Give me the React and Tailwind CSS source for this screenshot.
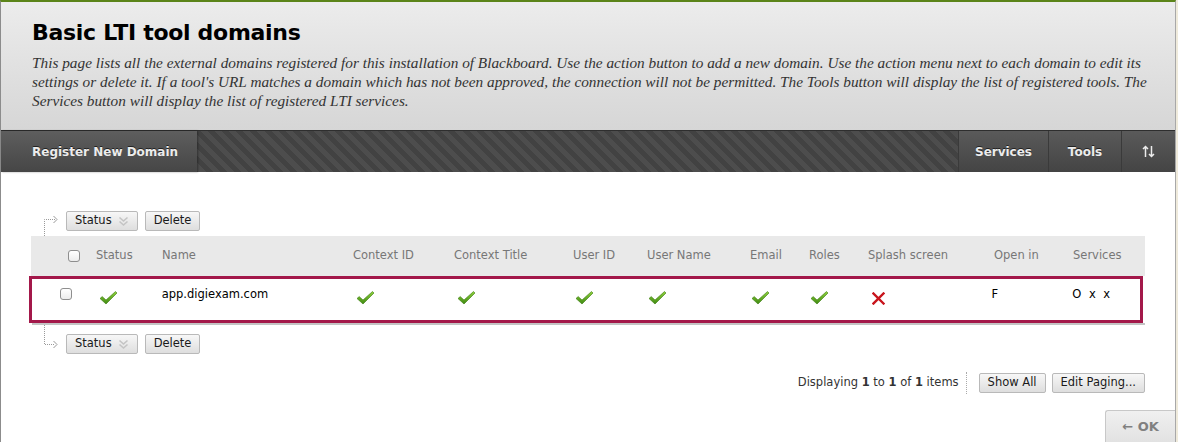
import React from 'react';

const sans = "font-['DejaVu_Sans','Liberation_Sans',sans-serif]";

function Check() {
    return (
        <svg width="19" height="15" viewBox="0 0 19 15">
            <defs>
                <linearGradient id="cg" x1="0" y1="0" x2="0" y2="1">
                    <stop offset="0" stopColor="#8fd13a" />
                    <stop offset="1" stopColor="#3f8a12" />
                </linearGradient>
            </defs>
            <path d="M1 8.5 L3.2 6.6 L7 10 L16.5 1.5 L18 3 L7 14 Z" fill="url(#cg)" stroke="#3a7a10" strokeWidth="0.6" strokeLinejoin="round" />
        </svg>
    );
}

function Cross() {
    return (
        <svg width="13" height="13" viewBox="0 0 13 13">
            <path d="M1.5 1.5 L11.5 11.5 M11.5 1.5 L1.5 11.5" stroke="#c8141c" strokeWidth="2.4" strokeLinecap="square" />
        </svg>
    );
}

function Box({ className = '' }) {
    return <span className={`inline-block w-[12px] h-[12px] rounded-[3px] border border-[#8e8e8e] bg-gradient-to-b from-white to-[#ececec] ${className}`}></span>;
}

function SmallButton({ children }) {
    return (
        <button className="h-[20px] px-[8px] border border-[#b9b9b9] rounded-[2px] bg-gradient-to-b from-[#f7f7f7] to-[#dedede] text-[11.5px] text-[#1a1a1a] leading-none flex items-center gap-[6px]">
            {children}
        </button>
    );
}

function ActionRow({ bottom }) {
    return (
        <div className="flex items-center h-[20px] pl-[42px]">
            <svg width="16" height="20" viewBox="0 0 16 20" className="mr-[7px] overflow-visible">
                {bottom ? (
                    <path d="M1.5 -9 V10.5 H12" fill="none" stroke="#999" strokeWidth="1" strokeDasharray="1 1" />
                ) : (
                    <path d="M1.5 25 V8.5 H12" fill="none" stroke="#999" strokeWidth="1" strokeDasharray="1 1" />
                )}
                <path d={bottom ? 'M10.5 7 L14 10.5 L10.5 14' : 'M10.5 5 L14 8.5 L10.5 12'} fill="none" stroke="#999" strokeWidth="1" />
            </svg>
            <SmallButton>
                Status
                <svg width="11" height="11" viewBox="0 0 11 11">
                    <path d="M1.5 1.5 L5.5 5 L9.5 1.5 M1.5 5.5 L5.5 9 L9.5 5.5" fill="none" stroke="#c4c4c4" strokeWidth="1.6" />
                </svg>
            </SmallButton>
            <span className="w-[7px]"></span>
            <SmallButton>Delete</SmallButton>
        </div>
    );
}

const cols = [
    { label: 'Status', w: 'w-[66px]' },
    { label: 'Name', w: 'w-[191px]' },
    { label: 'Context ID', w: 'w-[101px]' },
    { label: 'Context Title', w: 'w-[119px]' },
    { label: 'User ID', w: 'w-[74px]' },
    { label: 'User Name', w: 'w-[103px]' },
    { label: 'Email', w: 'w-[59px]' },
    { label: 'Roles', w: 'w-[59px]' },
    { label: 'Splash screen', w: 'w-[126px]' },
    { label: 'Open in', w: 'w-[79px]' },
    { label: 'Services', w: 'w-[70px]' },
];

const barBtn = 'bg-gradient-to-b from-[#5a5a5a] to-[#444] border-l border-l-[#3a3a3a] flex items-center justify-center text-[12px] font-bold text-[#ececec] [text-shadow:0_-1px_0_#222]';

export default function App() {
    return (
        <div className={`w-[1178px] h-[442px] bg-[#efeadb] overflow-hidden ${sans}`}>
            <div className="w-[1176px] h-[442px] bg-white border-t-2 border-t-[#5b8419] border-l border-l-[#8c8c8c] border-r border-r-[#a8a8a8] flex flex-col">
                <div className="h-[128px] bg-gradient-to-b from-[#ececec] to-[#d6d6d6] pl-[31px] pt-[17px]">
                    <h1 className="text-[22px] font-bold text-black leading-[28px] tracking-[-0.3px]">Basic LTI tool domains</h1>
                    <p className="mt-[6px] font-['Liberation_Serif',serif] italic text-[15.3px] leading-[19px] text-[#333] whitespace-nowrap">
                        This page lists all the external domains registered for this installation of Blackboard. Use the action button to add a new domain. Use the action menu next to each domain to edit its<br />
                        settings or delete it. If a tool's URL matches a domain which has not been approved, the connection will not be permitted. The Tools button will display the list of registered tools. The<br />
                        Services button will display the list of registered LTI services.
                    </p>
                </div>

                <div className="h-[42px] flex border-t border-t-[#2e2e2e] bg-[#474747] bg-[repeating-linear-gradient(45deg,#4d4d4d_0px,#4d4d4d_5px,#424242_5px,#424242_10px)]">
                    <div className="w-[196px] bg-gradient-to-b from-[#5e5e5e] to-[#464646] shadow-[1px_0_2px_rgba(0,0,0,0.35)] flex items-center pl-[31px] text-[12px] font-bold text-[#ececec] [text-shadow:0_-1px_0_#222]">
                        Register New Domain
                    </div>
                    <div className="flex-1"></div>
                    <div className={`w-[90px] ${barBtn}`}>Services</div>
                    <div className={`w-[73px] ${barBtn}`}>Tools</div>
                    <div className={`w-[54px] ${barBtn}`}>
                        <svg width="13" height="13" viewBox="0 0 13 13">
                            <path d="M3.5 12 V1.5 M1 4 L3.5 1.5 L6 4 M9.5 1 V11.5 M7 9 L9.5 11.5 L12 9" fill="none" stroke="#ececec" strokeWidth="1.5" />
                        </svg>
                    </div>
                </div>

                <div className="flex-1 relative pt-[39px]">
                    <ActionRow />
                    <div className="ml-[30px] w-[1114px] mt-[5px]">
                        <div className="h-[40px] bg-[#e9e9e9] flex items-center text-[11.5px] text-[#777]">
                            <div className="w-[65px] pl-[37px] flex items-center"><Box /></div>
                            {cols.map(c => (
                                <div key={c.label} className={`${c.w} shrink-0`}>{c.label}</div>
                            ))}
                        </div>
                        <div className="-ml-[2px] w-[1114px] h-[47px] border-[3px] border-[#a3184a] flex text-[11.5px] text-black">
                            <div className="w-[64px] pl-[28px] pt-[9px]"><Box /></div>
                            <div className="w-[66px] pt-[11px] pl-[3px]"><Check /></div>
                            <div className="w-[191px] pt-[7px]">app.digiexam.com</div>
                            <div className="w-[101px] pt-[11px] pl-[4px]"><Check /></div>
                            <div className="w-[119px] pt-[11px] pl-[4px]"><Check /></div>
                            <div className="w-[74px] pt-[11px] pl-[3px]"><Check /></div>
                            <div className="w-[103px] pt-[11px] pl-[3px]"><Check /></div>
                            <div className="w-[59px] pt-[11px] pl-[3px]"><Check /></div>
                            <div className="w-[59px] pt-[11px] pl-[3px]"><Check /></div>
                            <div className="w-[126px] pt-[13px] pl-[6px]"><Cross /></div>
                            <div className="w-[79px] pt-[7px]">F</div>
                            <div className="w-[70px] pt-[7px] pl-[2px] tracking-[2px]">O x x</div>
                        </div>
                        <div className="h-[2px] bg-[#c4c4c4] ml-[1px]"></div>
                    </div>
                    <div className="mt-[9px]">
                        <ActionRow bottom />
                    </div>
                    <div className="mt-[18px] ml-[30px] w-[1114px] flex items-center justify-end text-[11.5px] text-[#333]">
                        <span>Displaying <b>1</b> to <b>1</b> of <b>1</b> items</span>
                        <span className="h-[22px] border-l border-dotted border-l-[#aaa] ml-[7px] mr-[12px]"></span>
                        <SmallButton>Show All</SmallButton>
                        <span className="w-[6px]"></span>
                        <SmallButton>Edit Paging...</SmallButton>
                    </div>
                    <div className="absolute right-0 bottom-0 w-[70px] h-[32px] bg-gradient-to-b from-[#f0f0f0] to-[#e2e2e2] border border-[#c8c8c8] border-r-0 border-b-0 rounded-tl-[3px] flex items-center justify-center text-[13px] font-bold text-[#808080]">
                        ← OK
                    </div>
                </div>
            </div>
        </div>
    );
}
